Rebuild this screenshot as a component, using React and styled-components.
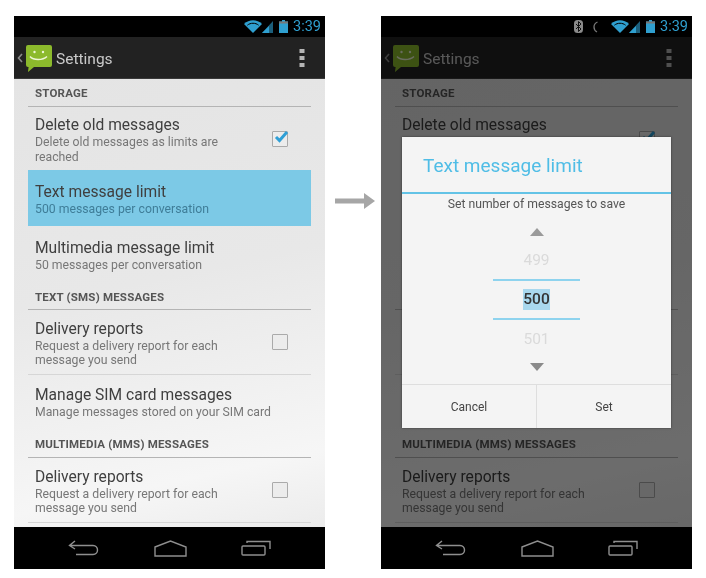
import React from 'react';
import styled, { createGlobalStyle } from 'styled-components';

const GlobalStyle = createGlobalStyle`
  html, body {
    margin: 0;
    background: #fff;
    font-family: Roboto, "Liberation Sans", sans-serif;
  }
`;

const Page = styled.div`
  display: flex;
  align-items: flex-start;
  padding: 16px 14px 9px;
  width: 706px;
  height: 578px;
  box-sizing: border-box;
`;

const ArrowSlot = styled.div`
  width: 56px;
  flex: none;
  padding: 176px 0 0 10px;
  box-sizing: border-box;
  filter: blur(0.6px);
`;

const Phone = styled.div`
  width: 311px;
  height: 553px;
  flex: none;
  display: flex;
  flex-direction: column;
  background: #000;
  filter: blur(0.6px);
`;

const StatusBar = styled.div`
  height: 21px;
  flex: none;
  display: flex;
  align-items: center;
  justify-content: flex-end;
  padding-right: 5px;
  background: #000;
`;

const Clock = styled.span`
  color: #2f9fcf;
  font-size: 14.5px;
  margin-left: 5px;
  width: 27px;
`;

const Main = styled.div`
  position: relative;
  height: 490px;
  flex: none;
  display: flex;
  flex-direction: column;
`;

const ActionBar = styled.div`
  height: 42px;
  flex: none;
  display: flex;
  align-items: center;
  background: #222;
  box-shadow: inset 0 -1px 0 #3a3a3a;
  padding: 0 20px 0 3px;
`;

const ActionTitle = styled.span`
  color: #c9c9c9;
  font-size: 15.5px;
  margin: 2px 0 0 3px;
  flex: 1;
`;

const Content = styled.div`
  flex: 1;
  padding: 0 14px;
  background: linear-gradient(168deg, #e4e4e4 0%, #e8e8e8 45%, #f6f6f6 85%, #ececec 100%);
  overflow: hidden;
`;

const SectionHead = styled.div`
  height: ${(p) => p.$h}px;
  box-sizing: border-box;
  border-bottom: 1px solid #b4b4b4;
  display: flex;
  align-items: flex-end;
  padding: 0 7px ${(p) => p.$pb}px;
  color: #555;
  font-size: 11.5px;
  font-weight: 700;
  letter-spacing: 0.2px;
`;

const HeadLabel = styled.span`
  visibility: ${(p) => (p.$covered ? 'hidden' : 'visible')};
`;

const Row = styled.div`
  height: ${(p) => p.$h}px;
  box-sizing: border-box;
  display: flex;
  align-items: center;
  padding: 0 23px 0 7px;
  background: ${(p) => (p.$active ? '#7cc9e6' : 'transparent')};
  border-bottom: ${(p) => (p.$line ? '1px solid #d6d6d6' : 'none')};
`;

const RowText = styled.div`
  flex: 1;
  padding-right: ${(p) => (p.$short ? 20 : 0)}px;
`;

const RowTitle = styled.div`
  color: #3f3f3f;
  font-size: 15.6px;
  line-height: 20px;
  margin-top: 2px;
  visibility: ${(p) => (p.$covered ? 'hidden' : 'visible')};
`;

const RowSub = styled.div`
  color: ${(p) => (p.$active ? '#3f7d98' : '#777')};
  font-size: 12.25px;
  line-height: 14.5px;
  visibility: ${(p) => (p.$covered ? 'hidden' : 'visible')};
`;

const Check = styled.div`
  width: 14px;
  height: 14px;
  flex: none;
  border: 1px solid #aaa;
  border-radius: 1px;
  background: #ececec;
  position: relative;
`;

const Tick = styled.svg`
  position: absolute;
  left: 0;
  top: -3px;
`;

const NavBar = styled.div`
  height: 42px;
  flex: none;
  display: flex;
  align-items: center;
  background: #000;
  padding: 0 53px 0 54px;
  justify-content: space-between;
`;

const Scrim = styled.div`
  position: absolute;
  inset: 0;
  background: rgba(0, 0, 0, 0.56);
`;

const Dialog = styled.div`
  position: absolute;
  left: 21px;
  top: 100px;
  width: 269px;
  height: 291px;
  display: flex;
  flex-direction: column;
  background: #f4f4f4;
  box-shadow: 0 0 2px rgba(0, 0, 0, 0.5);
`;

const DialogTitle = styled.div`
  height: 57px;
  flex: none;
  box-sizing: border-box;
  border-bottom: 2px solid #63c3e6;
  display: flex;
  align-items: center;
  padding: 2px 0 0 21px;
  color: #4fbde6;
  font-size: 19px;
`;

const DialogMessage = styled.div`
  text-align: center;
  color: #555;
  font-size: 12.2px;
  line-height: 14px;
  padding-top: 3px;
`;

const Picker = styled.div`
  flex: 1;
  display: flex;
  flex-direction: column;
  align-items: center;
  padding-top: 17px;
`;

const PickerArrow = styled.svg`
  display: block;
  flex: none;
  margin-top: ${(p) => p.$top || 0}px;
`;

const PickerValue = styled.div`
  height: ${(p) => (p.$current ? 37 : 38)}px;
  width: ${(p) => (p.$current ? '87px' : 'auto')};
  margin-top: ${(p) => p.$top || 0}px;
  display: flex;
  align-items: center;
  justify-content: center;
  color: ${(p) => (p.$current ? '#333' : '#dadada')};
  font-size: 15.5px;
  font-weight: ${(p) => (p.$current ? 500 : 400)};
  border-top: ${(p) => (p.$current ? '2px solid #8ed3ee' : 'none')};
  border-bottom: ${(p) => (p.$current ? '2px solid #8ed3ee' : 'none')};
`;

const Selected = styled.span`
  background: #a9d8ee;
  padding: 1px 0;
  line-height: 19px;
`;

const Buttons = styled.div`
  height: 43px;
  flex: none;
  display: flex;
  border-top: 1px solid #dedede;
`;

const DialogButton = styled.div`
  flex: 1;
  display: flex;
  align-items: center;
  justify-content: center;
  color: #444;
  font-size: 12px;
  & + & {
    border-left: 1px solid #dedede;
  }
`;

const Arrow = () => (
  <svg width="40" height="18" viewBox="0 0 40 18" style={{ display: 'block' }}>
    <path d="M0 6.5h29v5H0z M29 1l11 8-11 8z" fill="#a6a6a6" />
  </svg>
);

const Wifi = () => (
  <svg width="18" height="13" viewBox="0 0 18 13">
    <path d="M9 13L0 4c5-5 13-5 18 0z" fill="#2f9fcf" />
    <path d="M3.4 5.2c3-2.6 8.2-2.6 11.2 0" stroke="#000" fill="none" strokeWidth="1" />
  </svg>
);

const Signal = () => (
  <svg width="11" height="13" viewBox="0 0 11 13">
    <path d="M11 1v12H0z" fill="#2f9fcf" opacity="0.6" />
    <path d="M7 6v7H0z" fill="#2f9fcf" />
  </svg>
);

const Battery = () => (
  <svg width="9" height="13" viewBox="0 0 9 13" style={{ marginLeft: 6 }}>
    <path d="M3 0h3v1.5h3V13H0V1.5h3z" fill="#2f9fcf" />
    <path d="M0 1.5h9v2H0z" fill="#777" />
  </svg>
);

const Bluetooth = () => (
  <svg width="9" height="13" viewBox="0 0 9 13" style={{ marginRight: 10 }}>
    <rect width="9" height="13" rx="3.5" fill="#8a8a8a" />
    <path d="M2 4l5 5-2.5 2.5v-10L7 4 2 9" stroke="#111" fill="none" />
  </svg>
);

const Vibrate = () => (
  <svg width="5" height="12" viewBox="0 0 5 12" style={{ marginRight: 13 }}>
    <path d="M4.5 1C2 2 1 4 1 6s1 4 3 5" stroke="#777" fill="none" strokeWidth="1.3" />
  </svg>
);

const Logo = () => (
  <svg width="36" height="28" viewBox="0 0 36 28" style={{ marginTop: 2, flex: 'none' }}>
    <path d="M5 9L1.500 13 5 17" stroke="#8a8a8a" fill="none" strokeWidth="1.600" />
    <path d="M11 0h22a2 2 0 0 1 2 2v18a2 2 0 0 1-2 2H17l-6 5 .6-5H11a2 2 0 0 1-2-2V2a2 2 0 0 1 2-2z" fill="#8cba2c" />
    <circle cx="17.500" cy="7" r="1.200" fill="#eef6d6" />
    <circle cx="26" cy="7" r="1.200" fill="#eef6d6" />
    <path d="M13 11.500c3.500 4 12.500 4 17 0" stroke="#eef6d6" fill="none" strokeWidth="1.500" />
  </svg>
);

const OverflowDots = () => (
  <svg width="6" height="18" viewBox="0 0 6 18">
    <rect x="0.500" y="0" width="5" height="4" fill="#b5b5b5" />
    <rect x="0.500" y="7" width="5" height="4" fill="#b5b5b5" />
    <rect x="0.500" y="14" width="5" height="4" fill="#b5b5b5" />
  </svg>
);

const BackIcon = () => (
  <svg width="31" height="16" viewBox="0 0 31 16">
    <path d="M7 1L1.500 5.500 7 9M2 5.500h23c6 0 6 9 0 9H8" stroke="#8f8f8f" fill="none" strokeWidth="1.400" />
  </svg>
);

const HomeIcon = () => (
  <svg width="33" height="17" viewBox="0 0 33 17">
    <path d="M1 7L16.500 1 32 7v9H1z" stroke="#8f8f8f" fill="none" strokeWidth="1.400" />
  </svg>
);

const RecentIcon = () => (
  <svg width="31" height="16" viewBox="0 0 31 16">
    <rect x="1" y="6" width="23" height="9" rx="1" stroke="#8f8f8f" fill="none" strokeWidth="1.400" />
    <path d="M6 3V1.500h23V9" stroke="#8f8f8f" fill="none" strokeWidth="1.400" />
  </svg>
);

const Checkbox = ({ checked }) => (
  <Check>
    {checked && (
      <Tick width="16" height="15" viewBox="0 0 16 15">
        <path d="M3 8l3.500 3.500L14 3" stroke="#2f9fd6" fill="none" strokeWidth="3" />
      </Tick>
    )}
  </Check>
);

// hidden: the parts of a row that sit behind the dialog on the right screen
const SettingRow = ({ h, title, sub, active, line, check, checked, hideTitle, hideSub }) => (
  <Row $h={h} $active={active} $line={line}>
    <RowText $short={check}>
      <RowTitle $covered={hideTitle}>{title}</RowTitle>
      <RowSub $active={active} $covered={hideSub}>{sub}</RowSub>
    </RowText>
    {check && <Checkbox checked={checked} />}
  </Row>
);

const SettingsList = ({ dialog }) => (
  <Content>
    <SectionHead $h={28} $pb={6}><HeadLabel>STORAGE</HeadLabel></SectionHead>
    <SettingRow h={63} title="Delete old messages" sub="Delete old messages as limits are reached" check checked hideSub={dialog} />
    <SettingRow h={56} title="Text message limit" sub="500 messages per conversation" active={!dialog} hideTitle={dialog} hideSub={dialog} />
    <SettingRow h={56} title="Multimedia message limit" sub="50 messages per conversation" hideTitle={dialog} hideSub={dialog} />
    <SectionHead $h={28} $pb={5}><HeadLabel $covered={dialog}>TEXT (SMS) MESSAGES</HeadLabel></SectionHead>
    <SettingRow h={65} line title="Delivery reports" sub="Request a delivery report for each message you send" check hideTitle={dialog} hideSub={dialog} />
    <SettingRow h={52} title="Manage SIM card messages" sub="Manage messages stored on your SIM card" hideTitle={dialog} hideSub={dialog} />
    <SectionHead $h={31} $pb={6}><HeadLabel>MULTIMEDIA (MMS) MESSAGES</HeadLabel></SectionHead>
    <SettingRow h={65} line title="Delivery reports" sub="Request a delivery report for each message you send" check />
  </Content>
);

const Screen = ({ dialog }) => (
  <Phone>
    <StatusBar>
      {dialog && <Bluetooth />}
      {dialog && <Vibrate />}
      <Wifi />
      <Signal />
      <Battery />
      <Clock>3:39</Clock>
    </StatusBar>
    <Main>
      <ActionBar>
        <Logo />
        <ActionTitle>Settings</ActionTitle>
        <OverflowDots />
      </ActionBar>
      <SettingsList dialog={dialog} />
      {dialog && <Scrim />}
      {dialog && (
        <Dialog>
          <DialogTitle>Text message limit</DialogTitle>
          <DialogMessage>Set number of messages to save</DialogMessage>
          <Picker>
            <PickerArrow width="14" height="8" viewBox="0 0 14 8">
              <path d="M7 0l7 8H0z" fill="#9a9a9a" />
            </PickerArrow>
            <PickerValue $top={5}>499</PickerValue>
            <PickerValue $current><Selected>500</Selected></PickerValue>
            <PickerValue>501</PickerValue>
            <PickerArrow $top={5} width="14" height="8" viewBox="0 0 14 8">
              <path d="M7 8L14 0H0z" fill="#8a8a8a" />
            </PickerArrow>
          </Picker>
          <Buttons>
            <DialogButton>Cancel</DialogButton>
            <DialogButton>Set</DialogButton>
          </Buttons>
        </Dialog>
      )}
    </Main>
    <NavBar>
      <BackIcon />
      <HomeIcon />
      <RecentIcon />
    </NavBar>
  </Phone>
);

export default function App() {
  return (
    <>
      <GlobalStyle />
      <Page>
        <Screen />
        <ArrowSlot>
          <Arrow />
        </ArrowSlot>
        <Screen dialog />
      </Page>
    </>
  );
}
